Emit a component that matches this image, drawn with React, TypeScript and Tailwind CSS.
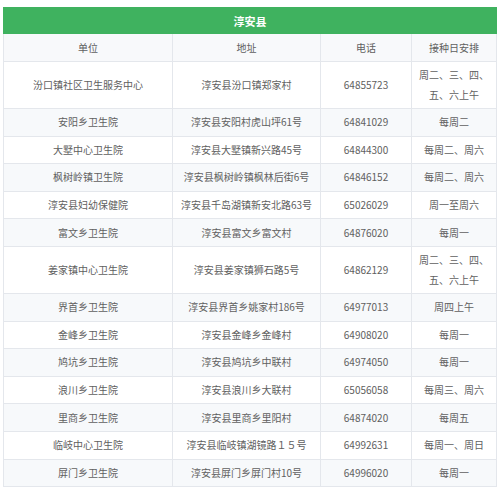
const rows: [string, string, string, string[]][] = [
  ['汾口镇社区卫生服务中心', '淳安县汾口镇郑家村', '64855723', ['周二、三、四、', '五、六上午']],
  ['安阳乡卫生院', '淳安县安阳村虎山坪61号', '64841029', ['每周二']],
  ['大墅中心卫生院', '淳安县大墅镇新兴路45号', '64844300', ['每周二、周六']],
  ['枫树岭镇卫生院', '淳安县枫树岭镇枫林后街6号', '64846152', ['每周二、周六']],
  ['淳安县妇幼保健院', '淳安县千岛湖镇新安北路63号', '65026029', ['周一至周六']],
  ['富文乡卫生院', '淳安县富文乡富文村', '64876020', ['每周一']],
  ['姜家镇中心卫生院', '淳安县姜家镇狮石路5号', '64862129', ['周二、三、四、', '五、六上午']],
  ['界首乡卫生院', '淳安县界首乡姚家村186号', '64977013', ['周四上午']],
  ['金峰乡卫生院', '淳安县金峰乡金峰村', '64908020', ['每周一']],
  ['鸠坑乡卫生院', '淳安县鸠坑乡中联村', '64974050', ['每周一']],
  ['浪川乡卫生院', '淳安县浪川乡大联村', '65056058', ['每周三、周六']],
  ['里商乡卫生院', '淳安县里商乡里阳村', '64874020', ['每周五']],
  ['临岐中心卫生院', '淳安县临岐镇湖镜路１５号', '64992631', ['每周一、周日']],
  ['屏门乡卫生院', '淳安县屏门乡屏门村10号', '64996020', ['每周一']],
];

const cell = 'border border-[#e4e7ec] px-1 text-center align-middle';

export default function App() {
  return (
    <div
      className="h-[494px] overflow-hidden bg-white px-[3px] pt-[7px]"
      style={{ fontFamily: '"Noto Sans CJK SC", "Noto Sans", sans-serif' }}
    >
      <table className="w-[493px] table-fixed border-collapse text-[10px] leading-[20px] text-[#606060]">
        <colgroup>
          <col className="w-[169px]" />
          <col className="w-[148px]" />
          <col className="w-[91px]" />
          <col className="w-[85px]" />
        </colgroup>
        <thead>
          <tr className="h-[26px] bg-[#3fb25f]">
            <th colSpan={4} className="border border-[#3fb25f] text-center text-[11px] font-bold text-white">
              淳安县
            </th>
          </tr>
        </thead>
        <tbody>
          <tr className="h-[28px] bg-[#f8f9fb]">
            <td className={cell}>单位</td>
            <td className={cell}>地址</td>
            <td className={cell}>电话</td>
            <td className={cell}>接种日安排</td>
          </tr>
          {rows.map(([name, addr, tel, days], i) => (
            <tr
              key={name}
              className={`${days.length > 1 ? 'h-[47px]' : 'h-[27.6px]'} ${i % 2 === 1 ? 'bg-[#f7f9fb]' : 'bg-white'}`}
            >
              <td className={cell}>{name}</td>
              <td className={cell}>{addr}</td>
              <td className={cell}>{tel}</td>
              <td className={cell}>
                {days.map((d) => (
                  <div key={d}>{d}</div>
                ))}
              </td>
            </tr>
          ))}
        </tbody>
      </table>
    </div>
  );
}
